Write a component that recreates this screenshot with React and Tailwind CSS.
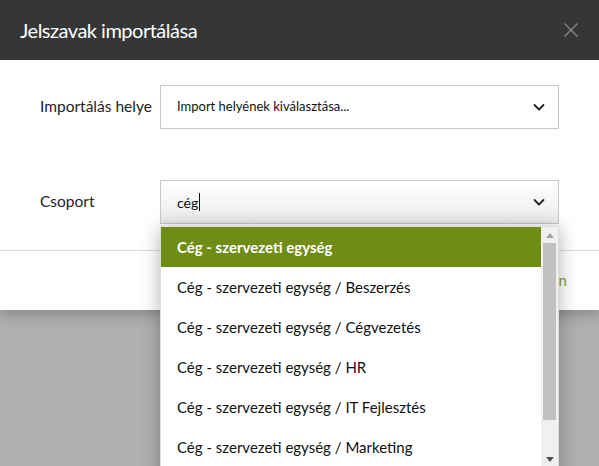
import React from 'react';

const ITEMS = [
  'Cég - szervezeti egység',
  'Cég - szervezeti egység / Beszerzés',
  'Cég - szervezeti egység / Cégvezetés',
  'Cég - szervezeti egység / HR',
  'Cég - szervezeti egység / IT Fejlesztés',
  'Cég - szervezeti egység / Marketing',
];

function Chevron() {
  return (
    <svg width="14" height="14" viewBox="0 0 14 14" fill="none">
      <path d="M2.5 5l4.5 4.5L11.5 5" stroke="#222" strokeWidth="1.8" strokeLinecap="round" strokeLinejoin="round" />
    </svg>
  );
}

export default function App() {
  return (
    <div className="relative h-[466px] w-[599px] overflow-hidden bg-[#b0b0b0]" style={{ fontFamily: 'Lato, "Noto Sans", sans-serif' }}>
      <div className="bg-white shadow-[0_4px_14px_rgba(0,0,0,0.25)]">
        <div className="flex h-[60px] items-center justify-between bg-[#353638] pl-5 pr-5">
          <h1 className="text-[20px] tracking-[-0.5px] text-white">Jelszavak importálása</h1>
          <svg width="16" height="16" viewBox="0 0 16 16">
            <path d="M1.5 1.5l13 13M14.5 1.5l-13 13" stroke="#8a8a8a" strokeWidth="1.3" />
          </svg>
        </div>
        <div className="px-10 pt-[25px] pb-[26px]">
          <div className="flex items-center">
            <label className="w-[120px] text-[15.5px] text-[#222]">Importálás helye</label>
            <div className="flex h-[44px] w-[399px] items-center justify-between border border-[#c8c8c8] pl-4 pr-3">
              <span className="text-[13px] text-[#111]">Import helyének kiválasztása...</span>
              <Chevron />
            </div>
          </div>
          <div className="mt-[51px] flex items-center">
            <label className="w-[120px] text-[15.5px] text-[#222]">Csoport</label>
            <div className="flex h-[44px] w-[399px] items-center justify-between border border-[#c8c8c8] bg-gradient-to-b from-white to-[#ececec] pl-4 pr-3">
              <span className="flex items-center text-[14px] text-[#111]">
                cég<span className="ml-px inline-block h-[18px] w-px bg-[#111]" />
              </span>
              <Chevron />
            </div>
          </div>
        </div>
        <div className="flex h-[60px] items-center justify-end border-t border-[#dcdcdc] pr-8">
          <span className="text-[15px] text-[#8aa020]">Rendben</span>
        </div>
      </div>

      <div className="absolute top-[226px] left-[160px] flex h-[260px] w-[399px] border border-[#dedede] bg-white shadow-[0_2px_18px_rgba(0,0,0,0.3)]">
        <ul className="flex-1">
          {ITEMS.map((item, i) => (
            <li
              key={item}
              className={
                i === 0
                  ? 'flex h-[40px] items-center bg-[#6f8c15] pl-4 text-[15px] font-bold text-white'
                  : 'flex h-[40px] items-center pl-4 text-[15px] text-[#111]'
              }
            >
              {item}
            </li>
          ))}
        </ul>
        <div className="flex h-[240px] w-[17px] flex-col items-center bg-[#f0f0f0]">
          <div className="flex h-[16px] items-center">
            <svg width="8" height="5" viewBox="0 0 8 5"><path d="M0 5L4 0l4 5z" fill="#a3a3a3" /></svg>
          </div>
          <div className="h-[177px] w-[13px] bg-[#c1c1c1]" />
          <div className="flex-1" />
          <div className="flex h-[16px] items-center">
            <svg width="8" height="5" viewBox="0 0 8 5"><path d="M0 0h8L4 5z" fill="#505050" /></svg>
          </div>
        </div>
      </div>
    </div>
  );
}
